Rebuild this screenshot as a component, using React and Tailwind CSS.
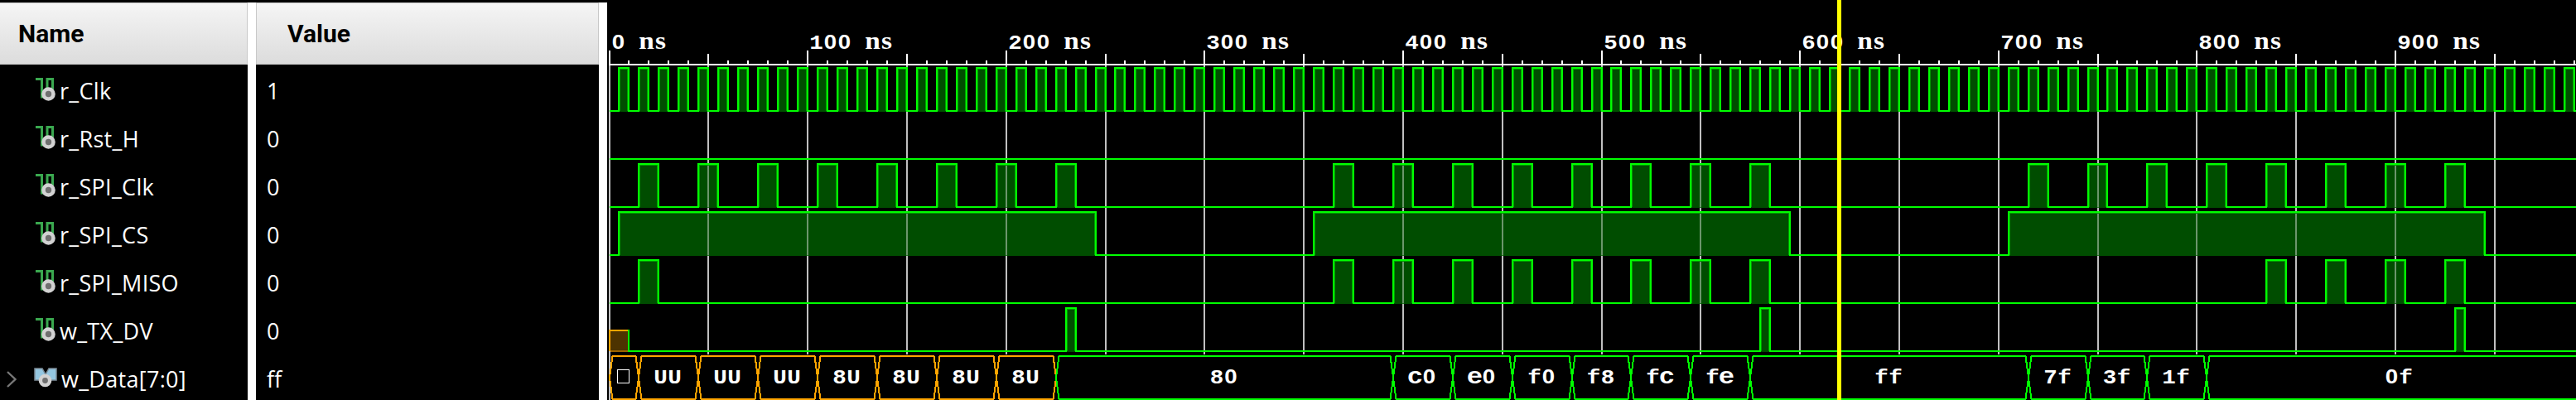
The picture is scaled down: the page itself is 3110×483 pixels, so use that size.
const rows = [
  { name: 'r_Clk', value: '1' },
  { name: 'r_Rst_H', value: '0' },
  { name: 'r_SPI_Clk', value: '0' },
  { name: 'r_SPI_CS', value: '0' },
  { name: 'r_SPI_MISO', value: '0' },
  { name: 'w_TX_DV', value: '0' },
  { name: 'w_Data[7:0]', value: 'ff', bus: true },
];

const GREEN = '#00ff00';
const ORANGE = '#ffa500';

// time in ns -> pixel column of the page
const X = (ns) => Math.round(735.5 + ns * 2.396);
const range = (n, f) => Array.from({ length: n }, (_, i) => f(i));

const burst = (start, count, step, len) => range(count, (i) => [start + i * step, start + i * step + len]);

const clock = range(100, (i) => [5 + i * 10, 10 + i * 10]);
const spiClk = [...burst(15, 8, 30, 10), ...burst(365, 8, 30, 10), ...burst(715, 8, 30, 10)];
const miso = [[15, 25], ...burst(365, 8, 30, 10), ...burst(835, 4, 30, 10)];

const waves = [
  { top: 82, bot: 134, high: clock },
  { top: 140, bot: 192, high: [] },
  { top: 198, bot: 250, high: spiClk },
  { top: 256, bot: 308, high: [[5, 245], [355, 595], [705, 945]] },
  { top: 314, bot: 366, high: miso },
  { top: 372, bot: 424, high: [[230, 235], [580, 585], [930, 935]], startAt: 10 },
];

const busEdges = [0, 15, 45, 75, 105, 135, 165, 195, 225, 395, 425, 455, 485, 515, 545, 575, 715, 745, 775, 805, 1010];
const busLabels = ['', 'UU', 'UU', 'UU', '8U', '8U', '8U', '8U', '80', 'c0', 'e0', 'f0', 'f8', 'fc', 'fe', 'ff', '7f', '3f', '1f', '0f'];

function Wave({ top, bot, high, startAt = 0 }) {
  let d = `M${X(startAt)} ${bot}`;
  high.forEach(([a, b]) => {
    d += `H${X(a)}V${top}H${X(b)}V${bot}`;
  });
  d += 'H3110';
  return (
    <g>
      <path d={d} fill="none" stroke={GREEN} strokeWidth="2" />
      {high.map(([a, b]) => {
        const x1 = X(a) + 1;
        const x2 = X(b) - 1;
        const grid = [];
        for (let g = 0; g <= 1000; g += 50) if (X(g) > x1 + 1 && X(g) < x2 - 1) grid.push(X(g));
        return (
          <g key={a}>
            <rect x={x1} y={top + 1} width={x2 - x1} height={bot - top + 0} fill="#006000" fillOpacity="0.8" />
            <path d={`M${x1 + 0.5} ${bot}V${top + 1.5}H${x2 - 0.5}V${bot}`} fill="none" stroke="#009c00" strokeWidth="1" />
            {grid.map((g) => (
              <rect key={g} x={g - 1} y={top + 2} width="2" height={bot - top - 2} fill="#c0c0c0" fillOpacity="0.45" />
            ))}
          </g>
        );
      })}
    </g>
  );
}

// monospace label placed cell by cell, letters with a low x-height get a bigger size
function Mono({ x, y, text, cell = 17 }) {
  const sx = 1.15;
  const glyphClass = (c) => {
    if (c === '0') return "font-['Liberation_Sans'] text-[24px]";
    if (c === 'n' || c === 's') return "font-['Liberation_Serif'] text-[29px]";
    if (c === 'c' || c === 'e') return "font-['Liberation_Mono'] text-[28px]";
    return "font-['Liberation_Mono'] text-[24px]";
  };
  return (
    <text
      transform={`translate(${x} ${y}) scale(${sx} 1)`}
      textAnchor="middle"
      className="fill-white whitespace-pre font-bold"
    >
      {text.split('').map((c, i) => (
        <tspan key={i} x={((i + 0.5) * cell) / sx} className={glyphClass(c)}>
          {c}
        </tspan>
      ))}
    </text>
  );
}

function WaveChart() {
  const ticks = range(100, (i) => i * 10);
  return (
    <svg viewBox="733 0 2377 483" className="block h-[483px] w-[2377px]" shapeRendering="crispEdges">
      {/* grid */}
      {range(20, (i) => i * 50).map((ns) => (
        <rect key={ns} x={X(ns) - 1} y={79} width="2" height={ns === 0 ? 404 : 349} fill="#c0c0c0" />
      ))}

      {/* ruler */}
      <rect x={735} y={77} width={2375} height={2} fill="#fff" />
      {ticks.map((ns) => {
        const top = ns % 100 === 0 ? 61 : ns % 50 === 0 ? 65 : 73;
        return <rect key={ns} x={X(ns) - 1} y={top} width="2" height={78 - top} fill="#fff" />;
      })}
      {range(10, (i) => i * 100).map((ns) => (
        <Mono key={ns} x={X(ns) + 2} y={59} text={`${ns} ns`} />
      ))}

      {waves.map((w) => (
        <Wave key={w.top} {...w} />
      ))}

      {/* w_TX_DV starts unknown */}
      <rect x={737} y={399} width={22} height={25} fill="#4d3300" />
      <path d="M736 424V399H758" fill="none" stroke={ORANGE} strokeWidth="2" />
      <path d="M737 424H758" fill="none" stroke="#9c6400" strokeWidth="2" />
      <path d="M759 398V425" fill="none" stroke={GREEN} strokeWidth="2" />

      {/* bus */}
      {busLabels.map((label, i) => {
        const s = X(busEdges[i]);
        const e = X(busEdges[i + 1]);
        const cx = label === '0f' ? 2896 : (s + e) / 2 - 1;
        const color = i < 8 ? ORANGE : GREEN;
        return (
          <g key={i}>
            <path
              d={`M${s} 456L${s + 3.5} 430H${e - 3.5}L${e} 456L${e - 3.5} 482H${s + 3.5}Z`}
              fill="none"
              stroke={color}
              strokeWidth="2"
            />
            {label && <Mono x={cx - 17} y={463} text={label} />}
          </g>
        );
      })}
      <rect x={745.5} y={446.5} width={14} height={16} fill="none" stroke="#fff" strokeWidth="1" />

      {/* cursor */}
      <rect x={2218} y={0} width={5} height={483} fill="#ffff00" />
    </svg>
  );
}

function SignalIcon() {
  return (
    <svg width="25" height="28" viewBox="0 0 25 28" className="-mt-[4px] shrink-0">
      <path d="M0 1.5H7.5V23H14V1.5H20.5V14" fill="none" stroke="#3aa84f" strokeWidth="3" />
      <circle cx="15.5" cy="19.5" r="6" fill="#6f6f6f" stroke="#d2d2d2" strokeWidth="4.6" />
    </svg>
  );
}

function BusIcon() {
  return (
    <svg width="29" height="24" viewBox="0 0 29 24" className="-ml-[3px] -mt-[4px] mr-[1px] shrink-0">
      <path d="M2 1H11L15 8L19 1H28V15H2Z" fill="#94c6e0" stroke="#7c8c98" strokeWidth="1.5" />
      <circle cx="14.5" cy="15.5" r="5.6" fill="#6f6f6f" stroke="#d2d2d2" strokeWidth="4.4" />
    </svg>
  );
}

function HeaderCell({ label, className }) {
  return (
    <div className={`flex h-[75px] items-center border border-[#c8c8c8] bg-linear-to-b from-[#f5f5f5] to-[#dcdcdc] font-['Roboto'] text-[30px] font-bold text-black ${className}`}>
      {label}
    </div>
  );
}

export default function App() {
  return (
    <div className="flex h-[483px] w-[3110px] overflow-hidden bg-black font-['Open_Sans','Noto_Sans',sans-serif]">
      <div className="w-[733px] shrink-0 pt-[3px]">
        <div className="flex h-[480px] gap-[10px] bg-white pr-[10px]">
          {/* Name column */}
          <div className="w-[299px] bg-black">
            <HeaderCell label="Name" className="border-l-0 pl-[22px]" />
            <div className="pt-[3px]">
              {rows.map((r) => (
                <div key={r.name} className="flex h-[58px] items-center text-[27px] tracking-[0.3px] text-white">
                  <div className="flex w-[43px] shrink-0 justify-start pl-[8px]">
                    {r.bus && (
                      <svg width="12" height="20" viewBox="0 0 12 20">
                        <path d="M1 1L10.5 10L1 19" fill="none" stroke="#777" strokeWidth="2.4" />
                      </svg>
                    )}
                  </div>
                  {r.bus ? <BusIcon /> : <SignalIcon />}
                  <span className="ml-[4px] whitespace-pre">{r.name}</span>
                </div>
              ))}
            </div>
          </div>

          {/* Value column */}
          <div className="w-[414px] bg-black">
            <HeaderCell label="Value" className="pl-[37px]" />
            <div className="pt-[3px]">
              {rows.map((r) => (
                <div key={r.name} className="flex h-[58px] items-center pl-[13px] text-[27px] text-white">
                  {r.value}
                </div>
              ))}
            </div>
          </div>
        </div>
      </div>

      <WaveChart />
    </div>
  );
}
